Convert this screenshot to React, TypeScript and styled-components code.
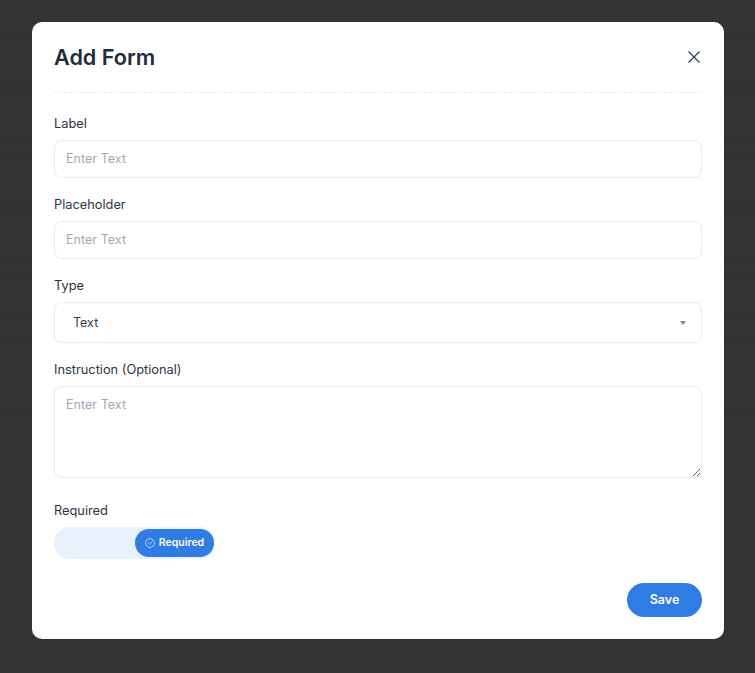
import React, { FC } from 'react'
import styled, { createGlobalStyle } from 'styled-components'

const GlobalStyle = createGlobalStyle`
  html, body {
    margin: 0;
    padding: 0;
    height: 100%;
    background: #333333;
    font-family: Inter, "Liberation Sans", sans-serif;
    overflow: hidden;
  }

  #root {
    position: relative;
  }
`

const Backdrop = styled.div`
  height: 673px;
  padding-top: 33px;
  box-sizing: border-box;
  background: #333333;
`

const BackdropRow = styled.div<{ $height: number; $gap: number }>`
  height: ${(props) => props.$height}px;
  margin-bottom: ${(props) => props.$gap}px;
  box-sizing: border-box;
  border-top: 1px solid #2e2e2e;
  border-bottom: 1px solid #2e2e2e;
`

const Overlay = styled.div`
  position: absolute;
  inset: 0;
  padding: 22px 31px 0 32px;
  box-sizing: border-box;
`

const Modal = styled.form`
  height: 617px;
  padding: 22px;
  box-sizing: border-box;
  display: flex;
  flex-direction: column;
  background: #ffffff;
  border-radius: 10px;
`

const Header = styled.div`
  flex: none;
  height: 49px;
  box-sizing: border-box;
  display: flex;
  align-items: flex-start;
  justify-content: space-between;
  border-bottom: 1px dashed #e9ebec;
`

const Title = styled.h2`
  margin: 0;
  font-size: 21.6px;
  line-height: 26px;
  font-weight: 600;
  color: #212b3b;
`

const CloseButton = styled.button`
  width: 16px;
  height: 16px;
  margin-top: 5px;
  padding: 0;
  border: 0;
  background: none;
  color: #1d3f66;
  display: flex;
`

const Field = styled.div<{ $top?: number }>`
  flex: none;
  margin-top: ${(props) => props.$top ?? 18}px;
  display: flex;
  flex-direction: column;
`

const Label = styled.label`
  padding-top: 1px;
  margin-bottom: 8px;
  font-size: 12.8px;
  line-height: 16px;
  font-weight: 400;
  color: #2d3542;
`

const TextInput = styled.input`
  height: 38px;
  padding: 0 11px 2px;
  box-sizing: border-box;
  border: 1px solid #e9ebec;
  border-radius: 8px;
  background: #ffffff;
  font-family: inherit;
  font-size: 12.6px;
  outline: none;

  &::placeholder {
    color: #a3a9b4;
    opacity: 1;
  }
`

const SelectWrap = styled.div`
  position: relative;
`

const Select = styled.select`
  width: 100%;
  height: 41px;
  padding: 0 18px;
  box-sizing: border-box;
  appearance: none;
  border: 1px solid #e9ebec;
  border-radius: 8px;
  background: #ffffff;
  font-family: inherit;
  font-size: 12.5px;
  color: #333f4d;
  outline: none;
`

const Arrow = styled.span`
  position: absolute;
  top: 19px;
  right: 16px;
  border-style: solid;
  border-width: 4px 3px 0 3px;
  border-color: #888888 transparent transparent transparent;
`

const TextArea = styled.textarea`
  display: block;
  width: 100%;
  height: 92px;
  padding: 10px 11px;
  box-sizing: border-box;
  border: 1px solid #e9ebec;
  border-radius: 8px;
  background: #ffffff;
  font-family: inherit;
  font-size: 12.6px;
  line-height: 16px;
  outline: none;

  &::placeholder {
    color: #a3a9b4;
    opacity: 1;
  }
`

const Toggle = styled.div`
  width: 161px;
  height: 32px;
  padding: 2px 1px;
  box-sizing: border-box;
  display: flex;
  justify-content: flex-end;
  background: #e8f0fb;
  border-radius: 16px;
`

const ToggleThumb = styled.div`
  width: 79px;
  padding-bottom: 1px;
  box-sizing: border-box;
  display: flex;
  align-items: center;
  justify-content: center;
  gap: 4px;
  background: #2e7ce4;
  border-radius: 14px;
  color: #ffffff;
  font-size: 10.5px;
  font-weight: 600;
`

const Footer = styled.div`
  margin-top: auto;
  display: flex;
  justify-content: flex-end;
`

const SaveButton = styled.button`
  width: 75px;
  height: 34px;
  padding: 0 0 2px;
  border: 0;
  border-radius: 17px;
  background: #2e7ce4;
  color: #ffffff;
  font-family: inherit;
  font-size: 12.5px;
  font-weight: 600;
`

const backdropRows = [
  { height: 50, gap: 10 },
  { height: 50, gap: 10 },
  { height: 50, gap: 10 },
  { height: 49, gap: 10 },
  { height: 48, gap: 23 },
  { height: 67, gap: 0 },
]

const CloseIcon: FC = () => (
  <svg width="16" height="16" viewBox="0 0 16 16" fill="none">
    <path d="M2.5 2.5l11 11M13.5 2.5l-11 11" stroke="currentColor" strokeWidth="1.2" />
  </svg>
)

const CheckIcon: FC = () => (
  <svg width="10" height="10" viewBox="0 0 10 10" fill="none">
    <circle cx="5" cy="5" r="4.4" stroke="#dbe8fa" strokeWidth="0.8" />
    <path d="M3.1 5.1l1.4 1.3 2.4-2.7" stroke="#dbe8fa" strokeWidth="0.8" />
  </svg>
)

const App: FC = () => (
  <>
    <GlobalStyle />
    <Backdrop>
      {backdropRows.map((row, index) => (
        <BackdropRow key={index} $height={row.height} $gap={row.gap} />
      ))}
    </Backdrop>
    <Overlay>
      <Modal>
        <Header>
          <Title>Add Form</Title>
          <CloseButton type="button" aria-label="Close">
            <CloseIcon />
          </CloseButton>
        </Header>
        <Field $top={22}>
          <Label>Label</Label>
          <TextInput placeholder="Enter Text" />
        </Field>
        <Field>
          <Label>Placeholder</Label>
          <TextInput placeholder="Enter Text" />
        </Field>
        <Field>
          <Label>Type</Label>
          <SelectWrap>
            <Select defaultValue="text">
              <option value="text">Text</option>
            </Select>
            <Arrow />
          </SelectWrap>
        </Field>
        <Field>
          <Label>Instruction (Optional)</Label>
          <TextArea placeholder="Enter Text" />
        </Field>
        <Field $top={24}>
          <Label>Required</Label>
          <Toggle>
            <ToggleThumb>
              <CheckIcon />
              Required
            </ToggleThumb>
          </Toggle>
        </Field>
        <Footer>
          <SaveButton type="button">Save</SaveButton>
        </Footer>
      </Modal>
    </Overlay>
  </>
)

export default App
